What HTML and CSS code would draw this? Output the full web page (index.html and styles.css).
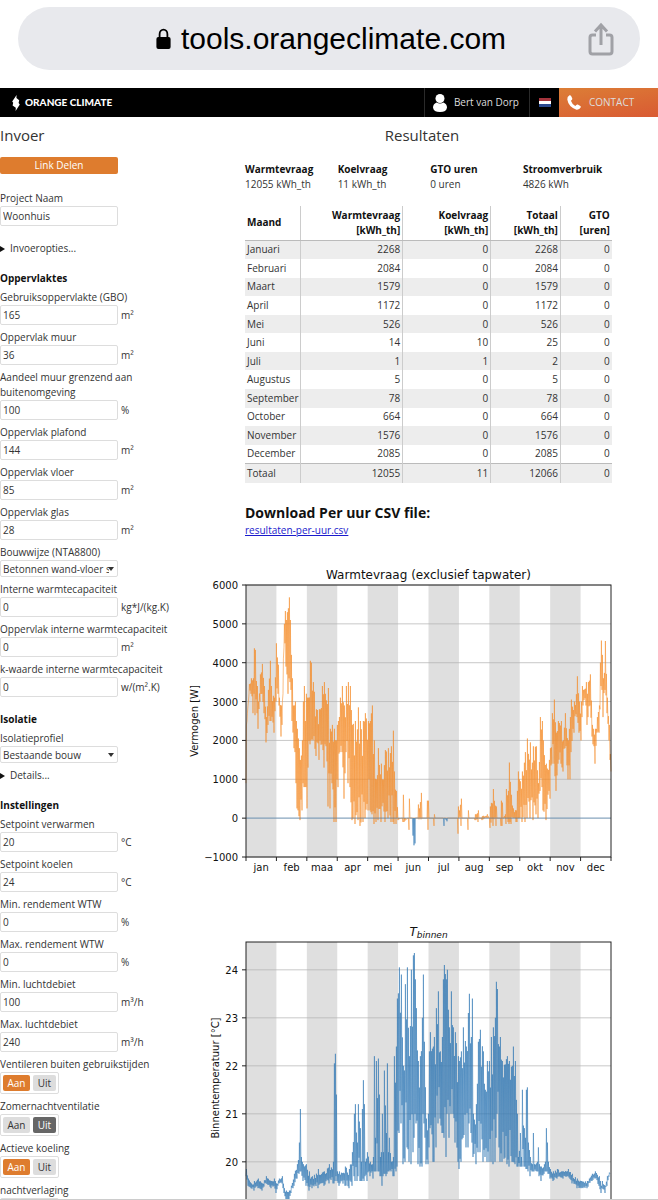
FILE: index.html
```html
<!DOCTYPE html>
<html lang="nl">
    <head>
        <meta charset="utf-8">
        <meta name="viewport" content="width=device-width, initial-scale=1.0">
        <title>Orange Climate Tools</title>
        <link rel="stylesheet" href="styles.css">
    </head>
    <body>
        <div class="address-bar">
            <div class="address-pill">
                <span class="address">
                    <svg class="lock" viewBox="0 0 15 22" aria-hidden="true">
                        <path d="M3.6 10V6.2a3.9 4.6 0 0 1 7.8 0V10" fill="none" stroke="#000" stroke-width="1.8"/>
                        <rect x="0.4" y="9" width="14.2" height="12" rx="2" fill="#000"/>
                    </svg>
                    tools.orangeclimate.com
                </span>
                <button class="share" type="button" aria-label="Delen">
                    <svg viewBox="0 0 26 34" fill="none" stroke="#a0a1a6" stroke-width="3">
                        <path d="M8 13H4.500Q2 13 2 15.500V29.500Q2 32 4.500 32H21.500Q24 32 24 29.500V15.500Q24 13 21.500 13H18"/>
                        <path d="M13 23V3M7 9.500L13 3L19 9.500"/>
                    </svg>
                </button>
            </div>
        </div>

        <header class="site-header">
            <a class="logo" href="#">
                <svg viewBox="0 0 8 16" aria-hidden="true"><path d="M4.600 0L4.400 3L7.200 5.300L6.600 8L7.800 9.500L3.600 16L3.800 12.800L0.600 10.500L1.200 7.800L0.200 6.400Z" fill="#fff"/></svg>
                ORANGE CLIMATE
            </a>
            <a class="user" href="#">
                <svg viewBox="0 0 14 18" aria-hidden="true"><circle cx="7" cy="4.500" r="4.500" fill="#fff"/><path d="M3.500 8.500Q7 10.500 10.500 8.500Q14 10 14 13.500Q13.500 18 7 18Q0.500 18 0 13.500Q0 10 3.500 8.500Z" fill="#fff"/></svg>
                Bert van Dorp
            </a>
            <button class="language" type="button" aria-label="Nederlands"><span class="flag"></span></button>
            <a class="contact" href="#">
                <svg viewBox="0 0 14 15" aria-hidden="true"><path d="M2.500 0.300Q0 1.500 0.300 4.500Q1.500 12 9.500 14.700Q12.500 15 13.800 12.300Q14 11.500 13.300 11L10.800 9.600Q10 9.300 9.300 9.900L8.300 11Q5 9.200 3.900 5.800L5 4.700Q5.500 4 5.200 3.300L4.100 0.900Q3.500 0 2.500 0.300Z" fill="#fff"/></svg>
                CONTACT
            </a>
        </header>

        <main class="page">
            <form class="inputs">
                <h2>Invoer</h2>
                <button class="share-link" type="button">Link Delen</button>

                <div class="field">
                    <label for="project">Project Naam</label>
                    <input id="project" type="text" value="Woonhuis">
                </div>
                <details class="options"><summary>Invoeropties...</summary></details>

                <h3>Oppervlaktes</h3>
                <div class="field">
                    <label for="gbo">Gebruiksoppervlakte (GBO)</label>
                    <input id="gbo" type="text" value="165"><span>m²</span>
                </div>
                <div class="field">
                    <label for="muur">Oppervlak muur</label>
                    <input id="muur" type="text" value="36"><span>m²</span>
                </div>
                <div class="field">
                    <label for="aandeel">Aandeel muur grenzend aan buitenomgeving</label>
                    <input id="aandeel" type="text" value="100"><span>%</span>
                </div>
                <div class="field">
                    <label for="plafond">Oppervlak plafond</label>
                    <input id="plafond" type="text" value="144"><span>m²</span>
                </div>
                <div class="field">
                    <label for="vloer">Oppervlak vloer</label>
                    <input id="vloer" type="text" value="85"><span>m²</span>
                </div>
                <div class="field">
                    <label for="glas">Oppervlak glas</label>
                    <input id="glas" type="text" value="28"><span>m²</span>
                </div>
                <div class="field">
                    <label for="bouwwijze">Bouwwijze (NTA8800)</label>
                    <div class="select"><select id="bouwwijze"><option>Betonnen wand-vloer skelet</option></select></div>
                </div>
                <div class="field">
                    <label for="capaciteit">Interne warmtecapaciteit</label>
                    <input id="capaciteit" type="text" value="0"><span>kg*J/(kg.K)</span>
                </div>
                <div class="field">
                    <label for="oppcap">Oppervlak interne warmtecapaciteit</label>
                    <input id="oppcap" type="text" value="0"><span>m²</span>
                </div>
                <div class="field">
                    <label for="kwaarde">k-waarde interne warmtecapaciteit</label>
                    <input id="kwaarde" type="text" value="0"><span>w/(m².K)</span>
                </div>

                <h3>Isolatie</h3>
                <div class="field">
                    <label for="profiel">Isolatieprofiel</label>
                    <div class="select"><select id="profiel"><option>Bestaande bouw</option></select></div>
                </div>
                <details><summary>Details...</summary></details>

                <h3>Instellingen</h3>
                <div class="field">
                    <label for="verwarmen">Setpoint verwarmen</label>
                    <input id="verwarmen" type="text" value="20"><span>°C</span>
                </div>
                <div class="field">
                    <label for="koelen">Setpoint koelen</label>
                    <input id="koelen" type="text" value="24"><span>°C</span>
                </div>
                <div class="field">
                    <label for="minwtw">Min. rendement WTW</label>
                    <input id="minwtw" type="text" value="0"><span>%</span>
                </div>
                <div class="field">
                    <label for="maxwtw">Max. rendement WTW</label>
                    <input id="maxwtw" type="text" value="0"><span>%</span>
                </div>
                <div class="field">
                    <label for="minlucht">Min. luchtdebiet</label>
                    <input id="minlucht" type="text" value="100"><span>m³/h</span>
                </div>
                <div class="field">
                    <label for="maxlucht">Max. luchtdebiet</label>
                    <input id="maxlucht" type="text" value="240"><span>m³/h</span>
                </div>
                <fieldset>
                    <legend>Ventileren buiten gebruikstijden</legend>
                    <div class="toggle">
                        <label class="on"><input type="radio" name="ventileren" checked><span>Aan</span></label>
                        <label class="off"><input type="radio" name="ventileren"><span>Uit</span></label>
                    </div>
                </fieldset>
                <fieldset>
                    <legend>Zomernachtventilatie</legend>
                    <div class="toggle">
                        <label class="on"><input type="radio" name="zomernacht"><span>Aan</span></label>
                        <label class="off"><input type="radio" name="zomernacht" checked><span>Uit</span></label>
                    </div>
                </fieldset>
                <fieldset>
                    <legend>Actieve koeling</legend>
                    <div class="toggle">
                        <label class="on"><input type="radio" name="koeling" checked><span>Aan</span></label>
                        <label class="off"><input type="radio" name="koeling"><span>Uit</span></label>
                    </div>
                </fieldset>
                <fieldset>
                    <legend>nachtverlaging</legend>
                    <div class="toggle"></div>
                </fieldset>
            </form>

            <section class="results">
                <h2>Resultaten</h2>
                <div class="results-body">
                    <dl class="totals">
                        <div><dt>Warmtevraag</dt><dd>12055 kWh_th</dd></div>
                        <div><dt>Koelvraag</dt><dd>11 kWh_th</dd></div>
                        <div><dt>GTO uren</dt><dd>0 uren</dd></div>
                        <div><dt>Stroomverbruik</dt><dd>4826 kWh</dd></div>
                    </dl>
                    <table class="months">
                        <colgroup><col class="c-month"><col class="c-heat"><col class="c-cool"><col class="c-total"><col class="c-gto"></colgroup>
                        <thead>
                            <tr><th>Maand</th><th>Warmtevraag<br>[kWh_th]</th><th>Koelvraag<br>[kWh_th]</th><th>Totaal<br>[kWh_th]</th><th>GTO<br>[uren]</th></tr>
                        </thead>
                        <tbody>
                            <tr><td>Januari</td><td>2268</td><td>0</td><td>2268</td><td>0</td></tr>
                            <tr><td>Februari</td><td>2084</td><td>0</td><td>2084</td><td>0</td></tr>
                            <tr><td>Maart</td><td>1579</td><td>0</td><td>1579</td><td>0</td></tr>
                            <tr><td>April</td><td>1172</td><td>0</td><td>1172</td><td>0</td></tr>
                            <tr><td>Mei</td><td>526</td><td>0</td><td>526</td><td>0</td></tr>
                            <tr><td>Juni</td><td>14</td><td>10</td><td>25</td><td>0</td></tr>
                            <tr><td>Juli</td><td>1</td><td>1</td><td>2</td><td>0</td></tr>
                            <tr><td>Augustus</td><td>5</td><td>0</td><td>5</td><td>0</td></tr>
                            <tr><td>September</td><td>78</td><td>0</td><td>78</td><td>0</td></tr>
                            <tr><td>October</td><td>664</td><td>0</td><td>664</td><td>0</td></tr>
                            <tr><td>November</td><td>1576</td><td>0</td><td>1576</td><td>0</td></tr>
                            <tr><td>December</td><td>2085</td><td>0</td><td>2085</td><td>0</td></tr>
                            <tr class="sum"><td>Totaal</td><td>12055</td><td>11</td><td>12066</td><td>0</td></tr>
                        </tbody>
                    </table>
                    <h4>Download Per uur CSV file:</h4>
                    <a class="csv" href="resultaten-per-uur.csv">resultaten-per-uur.csv</a>
                </div>
                <svg class="chart" id="heat-chart" viewBox="0 0 472 330"></svg>
                <svg class="chart" id="temp-chart" viewBox="0 0 472 330"></svg>
            </section>
        </main>
        <script src="charts.js"></script>
    </body>
</html>
```
FILE: styles.css
```css
* {
    box-sizing: border-box;
    margin: 0;
    padding: 0;
}

body {
    display: flex;
    flex-direction: column;
    height: 100vh;
    overflow: hidden;
    background: #fff;
    color: #333;
    font-family: "Open Sans", "Noto Sans", sans-serif;
    font-size: 10px;
    line-height: 15px;
}

input,
select,
button {
    font: inherit;
    color: inherit;
}

/* browser address bar */
.address-bar {
    padding: 7px 18px 18px;
}

.address-pill {
    display: grid;
    grid-template-columns: 1fr auto 1fr;
    align-items: center;
    height: 63px;
    padding: 0 26px;
    border-radius: 32px;
    background: #e8e9ed;
}

.address {
    grid-column: 2;
    display: flex;
    align-items: center;
    gap: 10px;
    margin-left: 4px;
    color: #000;
    font-family: "Liberation Sans", Arial, sans-serif;
    font-size: 30px;
    line-height: 36px;
}

.lock {
    width: 15px;
    height: 22px;
}

.share {
    justify-self: end;
    border: 0;
    background: none;
}

.share svg {
    display: block;
    width: 26px;
    height: 34px;
}

/* black site header */
.site-header {
    display: flex;
    flex: none;
    height: 29px;
    background: #000;
    color: #ddd;
}

.site-header a {
    display: flex;
    align-items: center;
    color: inherit;
    text-decoration: none;
}

.site-header .logo {
    flex: 1;
    gap: 5px;
    padding-left: 12px;
    color: #fff;
    font-family: Lato, sans-serif;
    font-weight: 900;
}

.logo svg {
    width: 8px;
    height: 16px;
}

.user {
    gap: 7px;
    padding: 0 10px 0 8px;
    border-left: 1px solid #2a2a2a;
}

.user svg {
    width: 14px;
    height: 18px;
}

.language {
    width: 30px;
    border: 0;
    border-left: 1px solid #2a2a2a;
    background: none;
}

.flag {
    display: block;
    width: 12px;
    height: 9px;
    margin: 0 auto;
    background: linear-gradient(#a5343c 33%, #fff 33% 66%, #2b4a8f 66%);
}

.contact {
    gap: 8px;
    width: 99px;
    padding-left: 8px;
    background: linear-gradient(170deg, #dc7e36, #d95a33);
}

.contact svg {
    width: 14px;
    height: 15px;
}

/* two columns below the header */
.page {
    display: grid;
    grid-template-columns: minmax(0, 186fr) minmax(0, 472fr);
    flex: 1;
    min-height: 0;
    overflow: hidden;
    border-bottom: 1px solid #ccc;
}

h2 {
    font-size: 15px;
    font-weight: 400;
    line-height: 20px;
}

h3 {
    margin: 15px 0 4px;
    color: #111;
    font-size: 10px;
    line-height: 15px;
}

.inputs {
    padding-top: 8px;
}

.share-link {
    display: block;
    width: 118px;
    height: 17px;
    margin: 12px 0 17px;
    border: 0;
    border-radius: 2px;
    background: #de7c2e;
    color: #fff;
}

.field {
    display: grid;
    grid-template-columns: 118px 1fr;
    column-gap: 3px;
    align-items: center;
    margin-bottom: 5px;
}

.field label {
    grid-column: 1 / -1;
}

.field input,
.select select {
    width: 100%;
    height: 20px;
    padding: 0 2px;
    border: 1px solid #ddd;
    border-radius: 2px;
    background: #fff;
}

.select {
    position: relative;
}

.select select {
    display: block;
    height: 17px;
    padding-right: 8px;
    line-height: 14px;
    appearance: none;
}

/* drop-down arrow on top of the select */
.select::after {
    content: "";
    position: absolute;
    top: 7px;
    right: 4px;
    border: 3px solid transparent;
    border-top: 4px solid #333;
    border-bottom: 0;
    pointer-events: none;
}

summary {
    display: flex;
    align-items: center;
    gap: 5px;
    list-style: none;
}

summary::before {
    content: "";
    border: 3px solid transparent;
    border-left: 5px solid #111;
    border-right: 0;
}

.options {
    margin-top: 15px;
}

fieldset {
    margin-bottom: 5px;
    border: 0;
}

.toggle {
    display: flex;
    gap: 3px;
    width: 59px;
    height: 22px;
    padding: 2px;
    border: 1px solid #ddd;
    border-radius: 2px;
}

.toggle label {
    position: relative;
    flex: 27;
    border-radius: 2px;
    background: #ddd;
    line-height: 17px;
    text-align: center;
}

.toggle .off {
    flex: 23;
}

.toggle input {
    position: absolute;
    inset: 0;
    opacity: 0;
}

.toggle label:has(:checked) {
    background: #de7c2e;
    color: #fff;
}

.toggle .off:has(:checked) {
    background: #666;
}

/* results */
.results {
    padding-top: 8px;
}

.results h2 {
    text-align: center;
}

.results-body {
    padding: 17px 9% 0 59px;
}

.totals {
    display: grid;
    grid-template-columns: repeat(4, 1fr);
}

.totals dt,
h4 {
    color: #111;
    font-weight: 700;
}

.months {
    width: 99%;
    height: 277px;
    margin-top: 14px;
    border-collapse: collapse;
    table-layout: fixed;
}

.c-month {
    width: 15%;
}

.c-heat {
    width: 28%;
}

.c-cool {
    width: 24%;
}

.c-total {
    width: 19%;
}

.c-gto {
    width: 14%;
}

.months th,
.months td {
    padding: 0 2px;
    text-align: right;
}

.months th {
    height: 34px;
    border-bottom: 1px solid #bbb;
    color: #111;
}

.months th + th,
.months td + td {
    border-left: 1px solid #ccc;
}

.months th:first-child,
.months td:first-child {
    text-align: left;
}

.months tbody tr:nth-child(odd) {
    background: #ededed;
}

.months .sum {
    border-top: 1px solid #bbb;
}

h4 {
    margin-top: 20px;
    font-size: 14px;
    line-height: 20px;
}

.csv {
    color: #1a1acc;
}

/* charts */
.chart {
    display: block;
    width: 100%;
    font-family: "DejaVu Sans", sans-serif;
    font-size: 10px;
    fill: #111;
}

.results-body + .chart {
    margin-top: 22px;
}

.chart .title {
    font-size: 12px;
}

.chart .italic {
    font-style: italic;
}

.chart .sub {
    font-size: 9px;
}

.chart .band {
    fill: #dfdfdf;
}

.chart .grid {
    stroke: #b0b0b0;
    stroke-opacity: 0.7;
}

.chart .axis {
    fill: none;
    stroke: #222;
}

.chart .series {
    fill: none;
    stroke-width: 0.7;
    stroke-opacity: 0.8;
}

.chart .heat {
    stroke: #f58a26;
}

.chart .cool {
    stroke: #2f77b4;
}
```
FILE: charts.js
```js
// plot area inside the 472 x 330 viewBox. One unit on the x axis is one day.
const LEFT = 60, WIDTH = 365, HEIGHT = 272;
const MONTHS = ["jan", "feb", "maa", "apr", "mei", "jun", "jul", "aug", "sep", "okt", "nov", "dec"];

// day,low,high
const HEAT = `0,900,2400 1,2500,2700 2,2900,3000 3,3200,3450 5,3200,3600 7,2700,3600 8,3200,4370 9,2650,4330 11,2700,3400 12,2300,3000 14,3000,3700
16,3200,3970 18,2700,3400 20,1950,2600 22,2400,3300 24,2500,4050 25,2500,3400 28,2200,3100 30,3000,4500 32,3200,3950 33,2900,3100 35,2100,2900 36,2400,3000
37,3200,4100 38,4400,5000 39,4500,5330 40,3900,5100 41,3700,5300 42,3200,5400 43,3600,5680 44,3500,5100 45,3300,4200 46,2500,3600 48,1800,2900 49,1700,3000
50,900,2500 51,250,2300 53,50,1800 54,-50,1500 56,200,2000 57,900,3000 58,800,3400 60,800,3200 61,250,3100 62,1300,3100 64,1900,4050 65,2000,4000 67,2000,3500
70,1600,2800 73,1500,2800 76,1900,3400 78,1300,3500 79,1900,3200 82,300,3350 84,250,2300 86,900,2400 88,-100,2300 90,-100,2000 91,1000,2400 92,800,2500
94,1700,3100 96,1700,3400 98,500,2900 100,1700,3400 102,900,3500 104,800,3400 106,-50,2400 109,-150,2500 112,-50,2850 114,-200,2500 117,-100,2500 119,0,2700
122,200,2500 124,200,2500 126,100,2900 128,-150,2000 130,-100,1000 132,-50,1800 135,-100,1400 139,-100,1750 142,0,1800 145,-100,1850 147,-100,2250
148,-150,1200 150,-150,700 152,-50,0 156,0,0 157,-100,600 158,-100,0 162,0,0 163,-300,500 164,0,0 171,0,0 172,0,350 173,-30,250 175,-30,650 176,0,0 180,0,0
181,0,450 182,-300,450 183,0,0 187,0,0 188,-200,100 189,0,0 211,0,0 212,-400,300 213,0,200 215,-200,500 216,0,0 221,0,0 222,-300,200 223,0,0 228,0,0 229,-50,100
230,-50,100 232,-100,200 233,0,0 236,-50,50 241,0,100 243,0,0 244,-250,300 247,-200,750 250,-200,300 251,0,0 254,0,0 255,-200,450 256,-200,400 257,0,0 259,0,100
260,-150,750 262,-100,700 263,-150,1430 265,-150,600 267,0,250 270,-100,200 271,-100,700 272,0,1200 273,0,1000 276,-100,1200 279,-100,1700 281,0,2050 284,0,1950
287,-50,1850 290,100,1850 292,0,900 294,700,2600 296,800,2500 297,200,2000 300,-50,1400 303,700,1500 304,500,1800 306,1400,2700 308,1400,3050 310,700,2200
312,1400,2500 315,1400,2500 317,1200,2000 319,1800,2700 322,1000,2000 324,1000,2600 325,1700,3050 328,2200,3000 331,2600,3650 333,2200,3000 335,2000,3000
336,2600,3400 337,2900,3300 340,2900,3500 341,2400,3200 342,2600,3500 344,2900,3700 346,2100,2400 347,1900,2300 349,1400,2300 351,2200,2600 353,2200,2900
354,2800,4000 355,3400,4570 356,3300,4200 357,2600,3600 359,3300,4560 361,2700,3100 363,2000,2400 364,1500,1650 365,1200,1500`;

const COOL = `0,0,0 166,0,0 167,-450,0 168,-700,0 169,-650,0 170,0,0 197,0,0 198,-200,0 199,0,0 201,-80,0 202,0,0 365,0,0`;

const TEMP = `0,19.7,19.85 2,19.5,19.65 5,19.45,19.55 8,19.4,19.6 12,19.45,19.65 16,19.4,19.55 20,19.55,19.7 25,19.45,19.6 28,19.5,19.65 30,19.35,19.55 33,19.55,19.65
36,19.55,19.7 38,19.35,19.45 40,19.2,19.4 43,19.1,19.4 45,19.35,19.5 48,19.5,19.75 51,19.65,19.95 53,19.75,20.4 54,19.8,21.1 55,19.8,20.1 57,19.6,19.95
60,19.5,19.95 63,19.4,19.8 66,19.45,19.7 72,19.45,19.85 78,19.5,19.8 83,19.55,19.95 87,19.55,20 88,19.55,22.05 89,19.6,22.25 90,19.7,21.4 91,19.6,19.8
93,19.5,19.8 99,19.5,19.9 103,19.45,19.85 106,19.5,20.2 108,19.7,21 109,19.6,21.2 111,19.6,20.4 112,19.7,21.2 114,19.6,20.7 115,19.6,20 116,19.6,21.1
117,19.65,21.7 118,19.6,21.2 119,19.7,20 121,19.6,20.2 124,19.7,20 127,19.65,20.1 128,19.8,22.2 129,19.8,20.5 130,19.8,22.1 132,19.8,22.15 133,19.8,21.4
134,19.7,20.1 135,19.7,20.2 136,19.5,21 137,19.7,20.2 138,19.75,21.9 140,19.7,20.6 141,19.75,22.05 142,19.8,20.2 143,19.8,20.5 145,19.8,20 147,19.7,20.1
148,19.7,22.2 150,19.8,22.4 151,19.9,23.4 153,20.6,24.05 155,20.8,23.9 157,19.95,22 159,20,23.7 161,20.3,24.05 163,20,22.2 165,19.95,24 167,20.2,24.3
168,20.5,24.35 169,21,23.8 170,20.8,23.2 172,19.95,22.1 174,19.9,22.2 176,19.9,23 177,21,23.9 178,20.8,22.5 180,19.95,20.9 182,19.95,21 183,20.3,22.3
184,20.7,22.7 187,20,22.4 188,20,22.6 190,20.3,23.2 192,20.8,23.55 194,20.9,22.3 196,20.6,22.6 197,20.6,23.8 198,20.5,24.1 200,20.1,23.8 201,21,24
203,20.5,22.8 205,21,23.55 207,21,22.8 209,20.4,22.7 212,20,22.2 213,19.85,22.1 215,20,22.3 217,20.5,22.8 220,20.3,22.4 222,20.3,23.1 223,20.8,23.5
225,20.6,22.6 226,20.4,23.4 227,20.1,21 230,19.95,21.2 232,20.2,22.5 234,20.2,22.75 237,20,22.3 239,20.1,21.5 241,20,22.1 243,20,22.1 245,20,22.6
247,19.95,22.8 249,20,23 250,20.5,23.75 251,21,23.6 253,20.3,22.4 254,20,22.6 256,20,22.1 261,19.95,22.2 263,19.9,22.1 266,20,22 267,20,22.4 269,19.95,22.1
271,19.9,21 272,19.9,20.1 274,19.9,20.6 275,19.9,20.1 276,19.9,21.5 278,19.9,20.7 279,19.9,20.5 280,19.85,21.5 281,19.85,21.55 282,19.8,20.4 284,19.7,20.1
286,19.8,19.95 287,19.8,20.6 288,19.8,19.95 291,19.8,20 292,19.8,20.3 293,19.7,19.95 295,19.6,19.9 299,19.8,20 300,19.8,20.7 301,19.8,20.4 302,19.75,20
304,19.65,19.85 307,19.6,19.8 311,19.65,19.85 317,19.65,19.8 322,19.7,19.85 326,19.55,19.75 331,19.45,19.65 335,19.45,19.6 341,19.45,19.6 346,19.6,19.75
349,19.65,19.8 353,19.5,19.7 355,19.35,19.5 356,19.45,19.6 359,19.35,19.5 361,19.5,19.7 364,19.75,19.85`;

// small seeded generator, so the lines are the same on every load
let seed = 7;
function random() {
    seed = (seed * 16807) % 2147483647;
    return seed / 2147483647;
}

// zigzag between the low and the high of every day
function seriesPath(text, toY) {
    const points = text.split(/\s+/).map(p => p.split(",").map(Number));
    let d = "";
    for (let i = 0; i < points.length - 1; i++) {
        const [day, low, high] = points[i];
        const [nextDay, nextLow, nextHigh] = points[i + 1];
        for (let x = day; x < nextDay; x++) {
            const t = (x - day) / (nextDay - day);
            let lo = low + (nextLow - low) * t;
            let hi = high + (nextHigh - high) * t;
            const spread = x === day ? 0 : (hi - lo) * 0.35;
            lo += random() * spread;
            hi -= random() * spread;
            d += `${d ? "L" : "M"}${LEFT + x} ${toY(lo).toFixed(1)}L${LEFT + x + 0.4} ${toY(hi).toFixed(1)}`;
        }
    }
    const last = points[points.length - 1];
    return d + `L${LEFT + last[0]} ${toY(last[1]).toFixed(1)}`;
}

function drawChart(id, { top, max, unit, ticks, months, title, label, labelX, series }) {
    const toY = value => top + (max - value) * unit;
    const bottom = top + HEIGHT;
    const right = LEFT + WIDTH;
    const step = WIDTH / 12;
    let out = "";
    for (let i = 0; i < 12; i += 2) {
        out += `<rect class="band" x="${LEFT + i * step}" y="${top}" width="${step}" height="${HEIGHT}"/>`;
    }
    months.forEach((month, i) => {
        out += `<text x="${LEFT + (i + 0.5) * step}" y="${bottom + 14}" text-anchor="middle">${month}</text>`;
    });
    ticks.forEach(tick => {
        const y = toY(tick);
        out += `<path class="grid" d="M${LEFT} ${y}H${right}"/><path class="axis" d="M${LEFT - 4} ${y}H${LEFT}"/>`;
        out += `<text x="${LEFT - 8}" y="${y + 4}" text-anchor="end">${String(tick).replace("-", "−")}</text>`;
    });
    series.forEach(s => {
        out += `<path class="series ${s.name}" d="${seriesPath(s.data, toY)}"/>`;
    });
    for (let i = 0; i <= 12; i++) out += `<path class="axis" d="M${LEFT + i * step} ${bottom}v4"/>`;
    out += `<rect class="axis" x="${LEFT}" y="${top}" width="${WIDTH}" height="${HEIGHT}"/>`;
    out += `<text class="title" x="${LEFT + WIDTH / 2}" y="${top - 6}" text-anchor="middle">${title}</text>`;
    out += `<text transform="translate(${labelX} ${top + HEIGHT / 2}) rotate(-90)" text-anchor="middle">${label}</text>`;
    document.getElementById(id).innerHTML = out;
}

drawChart("heat-chart", {
    top: 25, max: 6000, unit: HEIGHT / 7000,
    ticks: [6000, 5000, 4000, 3000, 2000, 1000, 0, -1000],
    months: MONTHS,
    title: "Warmtevraag (exclusief tapwater)",
    label: "Vermogen [W]", labelX: 12,
    series: [{ name: "heat", data: HEAT }, { name: "cool", data: COOL }]
});

drawChart("temp-chart", {
    top: 52, max: 24.58, unit: 48,
    ticks: [24, 23, 22, 21, 20],
    months: [],
    title: `<tspan class="italic">T</tspan><tspan class="italic sub" dy="2">binnen</tspan>`,
    label: "Binnentemperatuur [°C]", labelX: 33,
    series: [{ name: "cool", data: TEMP }]
});
```
